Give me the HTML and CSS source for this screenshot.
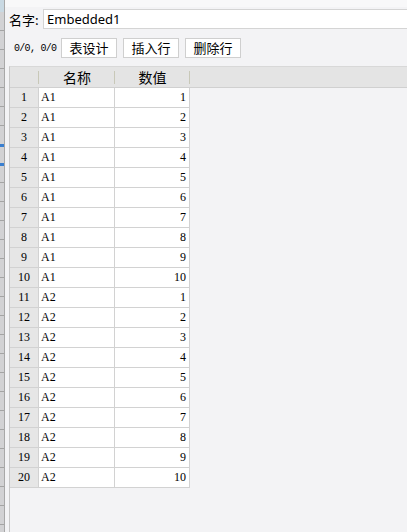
FILE: index.html
```html
<!DOCTYPE html>
<html lang="zh">
<head>
    <meta charset="UTF-8">
    <title>Embedded1</title>
    <link rel="stylesheet" href="styles.css">
</head>
<body>
    <div class="edge"></div>
    <div class="panel">
        <div class="name-row">
            <label for="name">名字:</label>
            <input id="name" type="text" value="Embedded1">
        </div>
        <div class="tools">
            <span class="pos">0/0, 0/0</span>
            <button>表设计</button>
            <button>插入行</button>
            <button>删除行</button>
        </div>
        <div class="sheet">
            <div class="head">
                <div class="hc num"></div>
                <div class="hc c1">名称</div>
                <div class="hc c2">数值</div>
            </div>
            <table class="grid">
                <tbody id="rows"></tbody>
            </table>
        </div>
    </div>
    <script>
        const rows = document.getElementById('rows');
        for (let i = 1; i <= 20; i++) {
            const tr = document.createElement('tr');
            const name = i <= 10 ? 'A1' : 'A2';
            const val = i <= 10 ? i : i - 10;
            tr.innerHTML = '<td class="num">' + i + '</td><td class="c1">' + name + '</td><td class="c2">' + val + '</td>';
            rows.appendChild(tr);
        }
    </script>
</body>
</html>
```

FILE: styles.css
```css
body {
    margin: 0;
    padding: 0;
    display: flex;
    height: 532px;
    overflow: hidden;
    background-color: #f3f3f5;
    font-family: "Noto Sans CJK SC", sans-serif;
    color: #000;
}
.edge {
    width: 4px;
    flex: none;
    border-right: 1px solid #a8a8a8;
    background-color: #d2d2d4;
    background-image: linear-gradient(#c9d9e3 0, #c9d9e3 12px, transparent 12px),
        linear-gradient(transparent 144px, #3a7fd0 144px, #3a7fd0 147px, transparent 147px, transparent 163px, #3a7fd0 163px, #3a7fd0 166px, transparent 166px),
        repeating-linear-gradient(transparent 0, transparent 18px, #a4a4a4 18px, #a4a4a4 19px);
    background-position: 0 0, 0 0, 0 12px;
}
.panel {
    flex: 1;
    display: flex;
    flex-direction: column;
    padding-left: 4px;
    background: linear-gradient(#f8f8f9 0, #f8f8f9 7px, #f3f3f5 7px);
    min-width: 0;
}
.name-row {
    display: flex;
    align-items: center;
    margin-top: 9px;
    height: 20px;
}
.name-row label {
    font-size: 13px;
    width: 34px;
    flex: none;
}
.name-row input {
    flex: 1;
    height: 20px;
    box-sizing: border-box;
    border: 1px solid #d4d4d4;
    border-right: none;
    background: #fff;
    padding: 0 3px;
    font-family: "Noto Sans", sans-serif;
    font-size: 13px;
    color: #000;
    outline: none;
    min-width: 0;
}
.tools {
    display: flex;
    align-items: center;
    margin-top: 9px;
    height: 20px;
    gap: 6px;
}
.pos {
    font-family: "Liberation Mono", monospace;
    font-size: 10px;
    letter-spacing: -0.7px;
    margin-left: 5px;
    width: 41px;
    flex: none;
    white-space: nowrap;
}
.tools button {
    width: 56px;
    height: 20px;
    flex: none;
    border: 1px solid #cfcfcf;
    background: #fff;
    font-family: "Noto Sans CJK SC", sans-serif;
    font-size: 13px;
    padding: 0;
    line-height: 18px;
    color: #000;
}
.sheet {
    margin-top: 8px;
    flex: 1;
    border-left: 1px solid #c8c8c8;
    border-top: 1px solid #d8d8d8;
}
.head {
    display: flex;
    height: 20px;
    background: #e4e4e4;
    border-bottom: 1px solid #d0d0d0;
}
.hc {
    box-sizing: border-box;
    height: 20px;
    font-size: 14px;
    line-height: 20px;
    text-align: center;
    background: linear-gradient(#c8c8b8, #c8c8b8) right 4px / 1px 13px no-repeat;
}
.hc.num {
    width: 29px;
}
.hc.c1 {
    width: 76px;
}
.hc.c2 {
    width: 75px;
}
.grid {
    border-collapse: collapse;
    font-family: "Liberation Serif", serif;
    font-size: 12px;
}
.grid td {
    height: 19px;
    padding: 0;
    border: 1px solid #d2d2d2;
    background: #fff;
    border-top: none;
}
.grid td.num {
    width: 28px;
    text-align: center;
    background: #e6e6e6;
    border-left: none;
}
.grid td.c1 {
    width: 73px;
    padding-left: 2px;
}
.grid td.c2 {
    width: 71px;
    text-align: right;
    padding-right: 3px;
}
```
